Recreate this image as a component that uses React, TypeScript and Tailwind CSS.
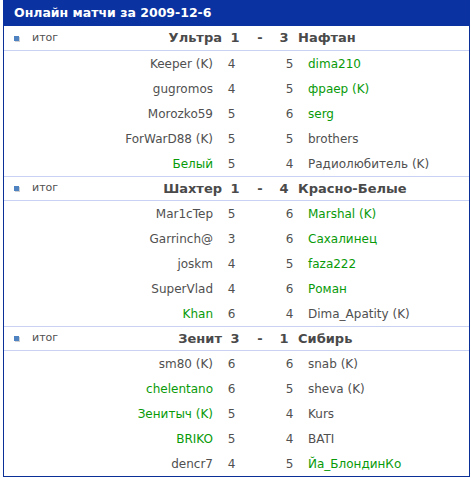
type Player = { name: string; score: number; green?: boolean };

type Match = {
  home: string;
  away: string;
  hs: number;
  as: number;
  rows: [Player, Player][];
};

const MATCHES: Match[] = [
  {
    home: "Ультра",
    away: "Нафтан",
    hs: 1,
    as: 3,
    rows: [
      [{ name: "Keeper (K)", score: 4 }, { name: "dima210", score: 5, green: true }],
      [{ name: "gugromos", score: 4 }, { name: "фраер (K)", score: 5, green: true }],
      [{ name: "Morozko59", score: 5 }, { name: "serg", score: 6, green: true }],
      [{ name: "ForWarD88 (K)", score: 5 }, { name: "brothers", score: 5 }],
      [{ name: "Белый", score: 5, green: true }, { name: "Радиолюбитель (K)", score: 4 }],
    ],
  },
  {
    home: "Шахтер",
    away: "Красно-Белые",
    hs: 1,
    as: 4,
    rows: [
      [{ name: "Mar1cTep", score: 5 }, { name: "Marshal (K)", score: 6, green: true }],
      [{ name: "Garrinch@", score: 3 }, { name: "Сахалинец", score: 6, green: true }],
      [{ name: "joskm", score: 4 }, { name: "faza222", score: 5, green: true }],
      [{ name: "SuperVlad", score: 4 }, { name: "Роман", score: 6, green: true }],
      [{ name: "Khan", score: 6, green: true }, { name: "Dima_Apatity (K)", score: 4 }],
    ],
  },
  {
    home: "Зенит",
    away: "Сибирь",
    hs: 3,
    as: 1,
    rows: [
      [{ name: "sm80 (K)", score: 6 }, { name: "snab (K)", score: 6 }],
      [{ name: "chelentano", score: 6, green: true }, { name: "sheva (K)", score: 5 }],
      [{ name: "Зенитыч (K)", score: 5, green: true }, { name: "Kurs", score: 4 }],
      [{ name: "BRIKO", score: 5, green: true }, { name: "BATI", score: 4 }],
      [{ name: "dencr7", score: 4 }, { name: "Йа_БлондинКо", score: 5, green: true }],
    ],
  },
];

const nameColor = (p: Player) => (p.green ? "text-[#089a08]" : "text-[#505050]");

const MatchBlock = ({ m, first }: { m: Match; first: boolean }) => (
  <div>
    <div
      className={`flex items-center h-[25px] border-b border-[#c9d2f2] ${
        first ? "" : "border-t"
      }`}
    >
      <div className="w-[218px] flex items-center justify-between">
        <div className="flex items-center">
          <div className="ml-[10px] w-[5px] h-[5px] bg-[#4f82c0] shadow-[1px_1px_0_#d0d0d0]" />
          <span className="ml-[13px] text-[11px] text-[#505050]">итог</span>
        </div>
        <span className="text-[13px] font-bold text-[#4a4a4a]">{m.home}</span>
      </div>
      <span className="w-[26px] text-center text-[13px] font-bold text-[#4a4a4a]">{m.hs}</span>
      <span className="w-[24px] text-center text-[13px] font-bold text-[#4a4a4a]">-</span>
      <span className="w-[24px] text-center text-[13px] font-bold text-[#4a4a4a]">{m.as}</span>
      <span className="pl-[2px] text-[13px] font-bold text-[#4a4a4a]">{m.away}</span>
    </div>
    {m.rows.map(([l, r], i) => (
      <div key={i} className="flex items-center h-[25px] text-[12px]">
        <span className={`w-[209px] text-right ${nameColor(l)}`}>{l.name}</span>
        <span className="w-[37px] text-center text-[#505050]">{l.score}</span>
        <span className="w-[21px]" />
        <span className="w-[37px] text-center text-[#505050]">{r.score}</span>
        <span className={nameColor(r)}>{r.name}</span>
      </div>
    ))}
  </div>
);

export default function App() {
  return (
    <div className="w-[471px] h-[478px] bg-white font-['DejaVu_Sans',Verdana,sans-serif]">
      <div className="ml-[3px] w-[467px] border-x border-b border-[#0a2f96]">
        <div className="h-[26px] -mx-px bg-[#0a32a0] flex items-center pl-[11px]">
          <span className="text-[12.5px] font-bold text-white">Онлайн матчи за 2009-12-6</span>
        </div>
        {MATCHES.map((m, i) => (
          <MatchBlock key={i} m={m} first={i === 0} />
        ))}
      </div>
    </div>
  );
}
